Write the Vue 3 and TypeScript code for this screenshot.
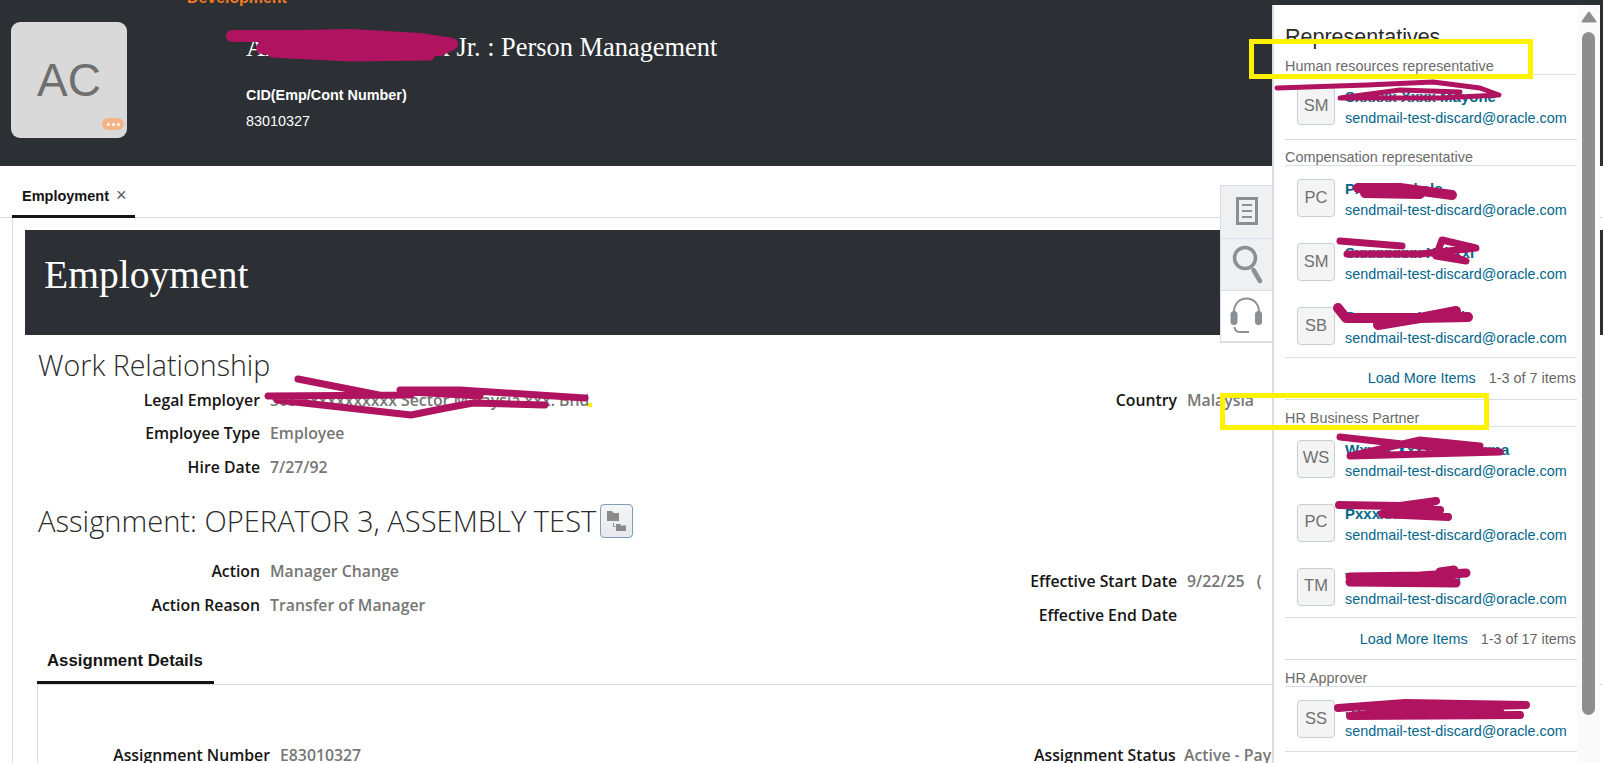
<script setup lang="ts">
interface Field {
  label: string;
  value?: string;
}

interface Person {
  initials: string;
  name: string;
}

interface RepSection {
  title: string;
  people: Person[];
  more?: string;
}

const mail = "sendmail-test-discard@oracle.com";

const workLeft: Field[] = [
  { label: "Legal Employer", value: "303 xxxxxxxxxxx Sector Malaysia xxx. Bhd" },
  { label: "Employee Type", value: "Employee" },
  { label: "Hire Date", value: "7/27/92" },
];

const assignLeft: Field[] = [
  { label: "Action", value: "Manager Change" },
  { label: "Action Reason", value: "Transfer of Manager" },
];

const assignRight: Field[] = [
  { label: "Effective Start Date", value: "9/22/25\u00a0\u00a0\u00a0(" },
  { label: "Effective End Date" },
];

const sections: RepSection[] = [
  {
    title: "Human resources representative",
    people: [{ initials: "SM", name: "Sxxxxx Xxxx Mayone" }],
  },
  {
    title: "Compensation representative",
    people: [
      { initials: "PC", name: "Pxxxxxxxkale" },
      { initials: "SM", name: "Sxxxxxxxx Xxhxxi" },
      { initials: "SB", name: "Sxxxxxxx Xxxxxi" },
    ],
    more: "1-3 of 7 items",
  },
  {
    title: "HR Business Partner",
    people: [
      { initials: "WS", name: "Wxxxx Xxxxx Sxxxxma" },
      { initials: "PC", name: "Pxxxxxxxxle" },
      { initials: "TM", name: "Txxxxxx Xxxxxd" },
    ],
    more: "1-3 of 17 items",
  },
  {
    title: "HR Approver",
    people: [{ initials: "SS", name: "Sxxxxxx Xxxxxxx Xxy" }],
  },
];

const scribbles: { d: string; w: number }[] = [
  { d: "M232 36 L300 36 L350 35 L420 39 L452 44 L440 50 L350 52 L262 48 L340 44 L420 46", w: 12 },
  { d: "M272 53 L350 57 L430 56 M300 46 L420 50", w: 9 },
  { d: "M1277 88 L1367 85 L1433 82 L1480 88 L1499 95 L1440 98 L1340 98 L1400 90 L1460 92", w: 5 },
  { d: "M1358 188 L1400 188 L1452 195 M1365 193 L1420 194", w: 10 },
  { d: "M1340 241 L1402 246 M1347 254 L1420 254 L1476 248 L1442 240 L1436 256 L1466 261 L1440 252", w: 7 },
  { d: "M1338 308 L1346 318 L1420 318 L1468 317 M1378 325 L1420 318 L1456 311", w: 10 },
  { d: "M1340 437 L1420 446 L1500 452 L1350 456 L1420 440 L1480 446", w: 7 },
  { d: "M1339 505 L1400 506 L1436 501 L1382 514 L1448 517 M1400 508 L1440 510", w: 8 },
  { d: "M1350 577 L1420 576 L1466 573 M1350 582 L1456 583 M1440 572 L1454 570", w: 9 },
  { d: "M1338 708 L1405 703 L1526 705 L1420 708 L1350 716 L1520 715 M1380 712 L1500 710", w: 8 },
  { d: "M298 379 L379 395 M268 396 L411 395 M277 400 L411 415 L446 408 L473 403 L545 405 M400 390 L460 390 L585 398 M410 392 L480 396", w: 7 },
];
</script>

<template>
  <div class="page">
    <header class="head">
      <div class="head-avatar">
        AC
        <span class="dots"><i></i><i></i><i></i></span>
      </div>
      <div class="head-text">
        <div class="env">Development</div>
        <div class="head-title">Axxxxx xxxxx xxx Jr. : Person Management</div>
        <div class="cid-label">CID(Emp/Cont Number)</div>
        <div class="cid-value">83010327</div>
      </div>
    </header>

    <nav class="tabs">
      <div class="tab">Employment <span class="tab-x">×</span></div>
    </nav>

    <main class="body">
      <div class="band">Employment</div>

      <h2 class="sec-title">Work Relationship</h2>
      <div class="cols">
        <div class="col-left">
          <div v-for="f in workLeft" :key="f.label" class="field">
            <span class="label">{{ f.label }}</span>
            <span class="val">{{ f.value }}</span>
          </div>
        </div>
        <div class="col-right">
          <div class="field">
            <span class="label">Country</span>
            <span class="val">Malaysia</span>
          </div>
        </div>
      </div>

      <h2 class="sec-title assign-title">
        Assignment: OPERATOR 3, ASSEMBLY TEST
        <button class="compare">
          <svg width="30" height="31" viewBox="0 0 30 31">
            <path d="M6 6h5l1.500 2H18v8H6z" fill="#8a8a8a" />
            <path d="M15 19h4l1 1.500h5V26H15z" fill="#8a8a8a" />
            <path d="M12.500 18v3.500h2" fill="none" stroke="#8a8a8a" />
          </svg>
        </button>
      </h2>
      <div class="cols">
        <div class="col-left assign-left">
          <div v-for="f in assignLeft" :key="f.label" class="field">
            <span class="label">{{ f.label }}</span>
            <span class="val">{{ f.value }}</span>
          </div>
        </div>
        <div class="col-right assign-right">
          <div v-for="f in assignRight" :key="f.label" class="field">
            <span class="label">{{ f.label }}</span>
            <span class="val">{{ f.value }}</span>
          </div>
        </div>
      </div>

      <div class="subtabs">
        <div class="subtab">Assignment Details</div>
      </div>
      <div class="subbody">
        <div class="cols">
          <div class="field number-field">
            <span class="label">Assignment Number</span>
            <span class="val">E83010327</span>
          </div>
          <div class="field status-field">
            <span class="label">Assignment Status</span>
            <span class="val">Active - Payroll Eligible</span>
          </div>
        </div>
      </div>
    </main>

    <div class="side-tabs">
      <div class="side-tab">
        <svg width="52" height="52" viewBox="0 0 52 52" fill="none" stroke="#8a8f94">
          <rect x="17.500" y="13.500" width="19" height="25" stroke-width="3" />
          <path d="M22 20h10M22 26h10M22 32h10" stroke-width="2.200" />
        </svg>
      </div>
      <div class="side-tab">
        <svg width="52" height="52" viewBox="0 0 52 52" fill="none" stroke="#8a8f94">
          <circle cx="25" cy="20" r="10.500" stroke-width="3.500" />
          <path d="M33.500 32L40 43" stroke-width="4.500" stroke-linecap="round" />
        </svg>
      </div>
      <div class="side-tab side-tab-on">
        <svg width="52" height="52" viewBox="0 0 52 52" fill="none" stroke="#8a8f94">
          <path d="M14 22C14 4 39 4 39 22" stroke-width="2" />
          <rect x="10.500" y="21" width="7" height="14" rx="3.500" fill="#8a8f94" stroke="none" />
          <rect x="35" y="21" width="7" height="14" rx="3.500" fill="#8a8f94" stroke="none" />
          <path d="M14.500 37C15 42 18 42 21 42H29" stroke-width="2" />
        </svg>
      </div>
    </div>

    <aside class="panel">
      <div class="panel-title">Representatives</div>
      <section v-for="s in sections" :key="s.title" class="rep-section">
        <div class="rep-label">{{ s.title }}</div>
        <div class="rep-list">
          <div v-for="p in s.people" :key="p.initials + p.name" class="rep-row">
            <div class="rep-avatar">{{ p.initials }}</div>
            <div class="rep-info">
              <div class="rep-name">{{ p.name }}</div>
              <div class="rep-mail">{{ mail }}</div>
            </div>
          </div>
        </div>
        <div v-if="s.more" class="rep-more">
          <span class="load">Load More Items</span>
          <span>{{ s.more }}</span>
        </div>
      </section>

      <div class="scrollbar">
        <svg class="arrow" width="16" height="12" viewBox="0 0 16 12">
          <path d="M8 1.500L14.500 10.500H1.500z" fill="#8e8e8e" stroke="#8e8e8e" stroke-width="2" stroke-linejoin="round" />
        </svg>
        <div class="thumb"></div>
      </div>
    </aside>

    <svg class="marks" width="1603" height="763" viewBox="0 0 1603 763" fill="none">
      <path
        v-for="(s, i) in scribbles"
        :key="i"
        :d="s.d"
        :stroke-width="s.w"
        stroke="#b0135f"
        stroke-linecap="round"
        stroke-linejoin="round"
      />
      <rect x="1251.500" y="41.500" width="279" height="35" stroke="#fff200" stroke-width="5" />
      <rect x="1222.500" y="395.500" width="264" height="32" stroke="#fff200" stroke-width="5" />
      <rect x="588" y="403" width="4" height="4" fill="#fff200" />
    </svg>
  </div>
</template>

<style>
html,
body {
  margin: 0;
  background: #fff;
  overflow: hidden;
}
</style>

<style scoped>
.page {
  position: relative;
  width: 1603px;
  height: 763px;
  overflow: hidden;
  background: #fff;
  font-family: "Liberation Sans", Arial, sans-serif;
  color: #161513;
}

.head {
  display: flex;
  height: 166px;
  background: #2c2f34;
  padding-left: 11px;
  box-sizing: border-box;
  overflow: hidden;
}

.head-avatar {
  position: relative;
  display: flex;
  align-items: center;
  justify-content: center;
  width: 116px;
  height: 116px;
  margin-top: 22px;
  background: #d9d9d9;
  border-radius: 9px;
  color: #6f6f6f;
  font-size: 46px;
}

.dots {
  position: absolute;
  right: 3px;
  bottom: 8px;
  display: flex;
  align-items: center;
  justify-content: center;
  gap: 2px;
  width: 22px;
  height: 12px;
  background: #f5b486;
  border-radius: 6px;
}

.dots i {
  width: 3px;
  height: 3px;
  background: #fff;
  border-radius: 50%;
}

.head-text {
  margin-left: 119px;
  color: #fff;
}

.env {
  height: 16px;
  margin-top: -10px;
  margin-left: -59px;
  color: #f07a22;
  font-size: 15.900px;
  font-weight: 700;
  line-height: 16px;
}

.head-title {
  margin-top: 26px;
  font-family: "Liberation Serif", "Times New Roman", serif;
  font-size: 26.400px;
  line-height: 30px;
  white-space: nowrap;
}

.cid-label {
  margin-top: 24px;
  font-size: 14.400px;
  font-weight: 700;
  line-height: 18px;
}

.cid-value {
  margin-top: 8px;
  font-size: 14.400px;
  line-height: 18px;
}

.tabs {
  height: 52px;
  border-bottom: 1px solid #d6dfe6;
  padding-left: 12px;
  box-sizing: border-box;
}

.tab {
  box-sizing: border-box;
  width: 123px;
  height: 52px;
  padding: 21px 0 0 10px;
  border-bottom: 3px solid #161513;
  font-size: 14.500px;
  font-weight: 700;
  line-height: 17px;
}

.tab-x {
  margin-left: 3px;
  color: #555;
  font-weight: 400;
  font-size: 18px;
}

.body {
  margin-left: 12px;
  border-left: 1px solid #d6dfe6;
  padding: 12px 0 0 12px;
  height: 545px;
  box-sizing: border-box;
  font-family: "Open Sans", "Noto Sans", sans-serif;
}

.band {
  height: 105px;
  padding: 22px 0 0 19px;
  box-sizing: border-box;
  background: #2c2f34;
  color: #fff;
  font-family: "Liberation Serif", "Times New Roman", serif;
  font-size: 39.600px;
  line-height: 46px;
}

.sec-title {
  margin: 12px 0 0 13px;
  font-size: 28.600px;
  font-weight: 300;
  line-height: 36px;
  color: #2b2b2b;
}

.assign-title {
  display: flex;
  align-items: center;
  margin-top: 19px;
  font-size: 29.100px;
}

.compare {
  width: 33px;
  height: 34px;
  margin-left: 4px;
  padding: 0;
  background: linear-gradient(#f4f5f6, #e6e9ec);
  border: 1px solid #7f9db5;
  border-radius: 4px;
}

.compare svg {
  display: block;
}

.cols {
  display: flex;
}

.col-left {
  width: 1000px;
}

.field {
  display: flex;
  align-items: center;
  height: 33.500px;
  font-size: 15.800px;
  white-space: nowrap;
}

.label {
  color: #161513;
  font-weight: 600;
  text-align: right;
}

.col-left .label {
  width: 235px;
}

.col-right .label {
  width: 152px;
}

.val {
  margin-left: 10px;
  color: #767676;
  font-weight: 600;
}

.assign-left {
  margin-top: 16px;
}

.assign-right {
  margin-top: 26px;
}

.subtabs {
  display: flex;
  margin: 17px 0 0 12px;
  border-bottom: 1px solid #d6dfe6;
}

.subtab {
  box-sizing: border-box;
  width: 177px;
  height: 35px;
  padding: 0 0 0 10px;
  border-bottom: 3px solid #161513;
  font-family: "Liberation Sans", Arial, sans-serif;
  font-size: 16.800px;
  font-weight: 700;
  line-height: 24px;
}

.subbody {
  margin-left: 12px;
  border-left: 1px solid #d6dfe6;
  height: 90px;
  padding-top: 54px;
  box-sizing: border-box;
}

.number-field {
  width: 996px;
}

.number-field .label {
  width: 232px;
}

.status-field .label {
  width: 140px;
}

.side-tabs {
  position: absolute;
  left: 1220px;
  top: 185px;
  width: 52px;
}

.side-tab {
  box-sizing: border-box;
  height: 52.500px;
  background: #eef0f1;
  border-top: 1px solid #d9dfe5;
  border-left: 1px solid #d9dfe5;
}

.side-tab svg {
  display: block;
  margin: -1px 0 0 -1px;
}

.side-tab-on {
  background: #fff;
  border-bottom: 2px solid #d9dde3;
}

.panel {
  position: absolute;
  left: 1272px;
  top: 5px;
  box-sizing: border-box;
  width: 328px;
  height: 758px;
  padding: 0 23px 0 11px;
  background: #fff;
  border-left: 2px solid #d9dde3;
}

.panel-title {
  height: 51px;
  padding-top: 19px;
  box-sizing: border-box;
  color: #2b2b2b;
  font-size: 21.500px;
  line-height: 26px;
}

.rep-section {
  padding-bottom: 7px;
}

.rep-label {
  height: 18px;
  border-bottom: 1px solid #d6dfe6;
  color: #6b6b6b;
  font-size: 14.400px;
  line-height: 21px;
}

.rep-list {
  padding-top: 13px;
  border-bottom: 1px solid #d6dfe6;
}

.rep-section:first-of-type .rep-list {
  padding-top: 12px;
}

.rep-row {
  display: flex;
  height: 64px;
  padding-left: 12px;
}

.rep-row:last-child {
  height: 49.500px;
}

.rep-row:only-child {
  height: 51px;
}

.rep-section:first-of-type .rep-row {
  height: 52px;
}

.rep-avatar {
  box-sizing: border-box;
  display: flex;
  align-items: center;
  justify-content: center;
  width: 38px;
  height: 38px;
  padding-bottom: 2px;
  background: #f4f4f4;
  border: 1px solid #c9ced2;
  border-radius: 4px;
  color: #707070;
  font-size: 16.500px;
}

.rep-info {
  margin-left: 10px;
}

.rep-name {
  margin-top: 1px;
  color: #04668b;
  font-size: 15px;
  font-weight: 700;
  line-height: 18px;
}

.rep-mail {
  margin-top: 3px;
  color: #04668b;
  font-size: 14.400px;
  line-height: 18px;
  white-space: nowrap;
}

.rep-more {
  display: flex;
  justify-content: flex-end;
  align-items: center;
  gap: 13px;
  height: 41px;
  padding-right: 1px;
  margin-bottom: 1px;
  border-bottom: 1px solid #d6dfe6;
  color: #666;
  font-size: 14.400px;
}

.load {
  color: #04668b;
}

.scrollbar {
  position: absolute;
  right: 0;
  top: 0;
  bottom: 0;
  width: 23px;
  background: #fafafa;
}

.arrow {
  position: absolute;
  left: 4px;
  top: 6px;
}

.thumb {
  position: absolute;
  left: 5px;
  top: 27px;
  width: 13px;
  height: 683px;
  background: #8e8e8e;
  border-radius: 7px;
}

.marks {
  position: absolute;
  left: 0;
  top: 0;
  pointer-events: none;
}
</style>
